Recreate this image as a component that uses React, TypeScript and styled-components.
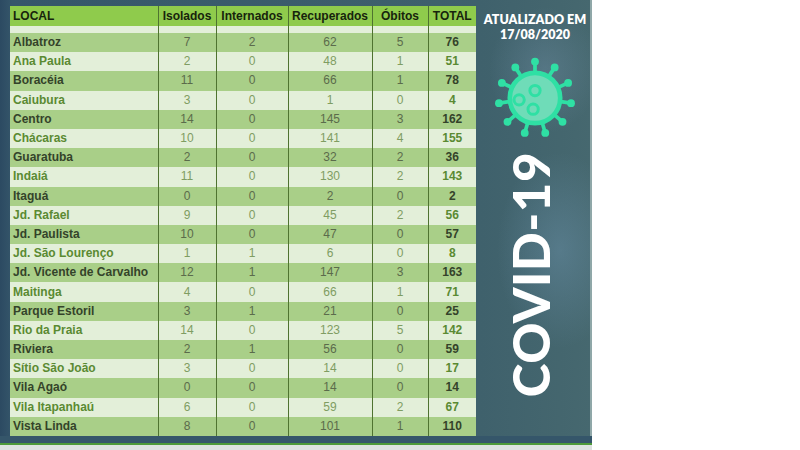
import styled, { createGlobalStyle } from "styled-components";

const GlobalStyle = createGlobalStyle`
	html, body {
		margin: 0;
		padding: 0;
		background: #ffffff;
	}
	body {
		width: 800px;
		height: 450px;
		overflow: hidden;
	}
`;

type Row = [string, number, number, number, number, number];

const rows: Row[] = [
	["Albatroz", 7, 2, 62, 5, 76],
	["Ana Paula", 2, 0, 48, 1, 51],
	["Boracéia", 11, 0, 66, 1, 78],
	["Caiubura", 3, 0, 1, 0, 4],
	["Centro", 14, 0, 145, 3, 162],
	["Chácaras", 10, 0, 141, 4, 155],
	["Guaratuba", 2, 0, 32, 2, 36],
	["Indaiá", 11, 0, 130, 2, 143],
	["Itaguá", 0, 0, 2, 0, 2],
	["Jd. Rafael", 9, 0, 45, 2, 56],
	["Jd. Paulista", 10, 0, 47, 0, 57],
	["Jd. São Lourenço", 1, 1, 6, 0, 8],
	["Jd. Vicente de Carvalho", 12, 1, 147, 3, 163],
	["Maitinga", 4, 0, 66, 1, 71],
	["Parque Estoril", 3, 1, 21, 0, 25],
	["Rio da Praia", 14, 0, 123, 5, 142],
	["Riviera", 2, 1, 56, 0, 59],
	["Sítio São João", 3, 0, 14, 0, 17],
	["Vila Agaó", 0, 0, 14, 0, 14],
	["Vila Itapanhaú", 6, 0, 59, 2, 67],
	["Vista Linda", 8, 0, 101, 1, 110],
];

const columns = [
	{ label: "LOCAL", width: 148 },
	{ label: "Isolados", width: 58 },
	{ label: "Internados", width: 72 },
	{ label: "Recuperados", width: 84 },
	{ label: "Óbitos", width: 56 },
	{ label: "TOTAL", width: 48 },
];

const Page = styled.div`
	width: 800px;
	height: 450px;
	background: #ffffff;
`;

const Poster = styled.div`
	display: flex;
	flex-direction: column;
	width: 592px;
	height: 450px;
	background:
		radial-gradient(ellipse 90px 140px at 560px 250px, rgba(120, 160, 190, 0.35), transparent 70%),
		radial-gradient(ellipse 80px 90px at 545px 70px, rgba(140, 170, 200, 0.25), transparent 70%),
		linear-gradient(90deg, #2c4a62 0px, #35566a 12px, #3f616c 480px, #46686f 592px);
	font-family: "Liberation Sans", Arial, sans-serif;
`;

const Main = styled.div`
	display: flex;
	flex: 1;
`;

const TableWrap = styled.div`
	padding: 6px 0 0 10px;
`;

const Table = styled.table`
	border-collapse: collapse;
	table-layout: fixed;
	width: 466px;
`;

const HeadCell = styled.th<{ $align: "left" | "center" }>`
	height: 20px;
	padding: 0 3px;
	background: #8fcb4c;
	color: #17240c;
	font-size: 12px;
	font-weight: 700;
	text-align: ${(p) => p.$align};
	border-left: 1px solid #4f7330;
	&:first-child {
		border-left: none;
	}
`;

const SpacerCell = styled.td`
	height: 7px;
	padding: 0;
	background: #e3efd9;
	border-left: 1px solid #4f7330;
	&:first-child {
		border-left: none;
	}
`;

const Cell = styled.td<{ $dark: boolean; $name?: boolean; $total?: boolean }>`
	height: 19.2px;
	padding: 0 3px;
	line-height: 19px;
	background: ${(p) => (p.$dark ? "#a9cf88" : "#e3efd9")};
	color: ${(p) =>
		p.$name || p.$total
			? p.$dark
				? "#34432a"
				: "#5a8a32"
			: p.$dark
			? "#5b6b4b"
			: "#7f9d62"};
	font-size: 12px;
	font-weight: ${(p) => (p.$name || p.$total ? 700 : 400)};
	text-align: ${(p) => (p.$name ? "left" : "center")};
	white-space: nowrap;
	border-left: 1px solid #4f7330;
	&:first-child {
		border-left: none;
	}
`;

const Side = styled.div`
	display: flex;
	flex: 1;
	flex-direction: column;
	align-items: center;
	padding-top: 12px;
	border-right: 2px solid #8fa7a8;
`;

const Updated = styled.div`
	color: #ffffff;
	font-family: Lato, "Open Sans", sans-serif;
	font-size: 12.5px;
	font-weight: 800;
	line-height: 15px;
	text-align: center;
	white-space: nowrap;
	margin-left: 4px;
`;

const Virus = styled.svg`
	margin-top: 14px;
	margin-left: 4px;
	width: 84px;
	height: 84px;
`;

const CovidText = styled.div`
	margin-top: 12px;
	margin-right: 4px;
	writing-mode: vertical-rl;
	transform: rotate(180deg);
	color: #ffffff;
	font-family: Lato, "Open Sans", sans-serif;
	font-size: 51px;
	font-weight: 900;
	line-height: 44px;
	letter-spacing: 0.5px;
`;

const Footer = styled.div`
	height: 14px;
	background: linear-gradient(
		180deg,
		#35566a 0px,
		#35566a 7px,
		#4d9a3a 7px,
		#4d9a3a 9px,
		#dde2e0 9px
	);
`;

function VirusIcon() {
	const spikes = Array.from({ length: 11 }, (_, i) => (i * 360) / 11 - 90);
	return (
		<Virus viewBox="0 0 90 90">
			{spikes.map((a) => {
				const r = (a * Math.PI) / 180;
				const x1 = 45 + Math.cos(r) * 28;
				const y1 = 45 + Math.sin(r) * 28;
				const x2 = 45 + Math.cos(r) * 39;
				const y2 = 45 + Math.sin(r) * 39;
				return (
					<g key={a}>
						<line x1={x1} y1={y1} x2={x2} y2={y2} stroke="#2fe0a4" strokeWidth="4" />
						<circle cx={x2} cy={y2} r="4.2" fill="#2fe0a4" />
					</g>
				);
			})}
			<circle cx="45" cy="45" r="27" fill="#6fdcb8" stroke="#2fe0a4" strokeWidth="5" />
			<circle cx="45" cy="37" r="5.5" fill="none" stroke="#2fe0a4" strokeWidth="3.2" />
			<circle cx="28" cy="47" r="5.5" fill="none" stroke="#2fe0a4" strokeWidth="3.2" />
			<circle cx="43" cy="57" r="5.5" fill="none" stroke="#2fe0a4" strokeWidth="3.2" />
		</Virus>
	);
}

function App() {
	return (
		<Page>
			<GlobalStyle />
			<Poster>
				<Main>
					<TableWrap>
						<Table>
							<colgroup>
								{columns.map((c) => (
									<col key={c.label} style={{ width: c.width }} />
								))}
							</colgroup>
							<thead>
								<tr>
									{columns.map((c, i) => (
										<HeadCell key={c.label} $align={i === 0 ? "left" : "center"}>
											{c.label}
										</HeadCell>
									))}
								</tr>
							</thead>
							<tbody>
								<tr>
									{columns.map((c) => (
										<SpacerCell key={c.label} />
									))}
								</tr>
								{rows.map((row, i) => {
									const dark = i % 2 === 0;
									return (
										<tr key={row[0]}>
											<Cell $dark={dark} $name>
												{row[0]}
											</Cell>
											<Cell $dark={dark}>{row[1]}</Cell>
											<Cell $dark={dark}>{row[2]}</Cell>
											<Cell $dark={dark}>{row[3]}</Cell>
											<Cell $dark={dark}>{row[4]}</Cell>
											<Cell $dark={dark} $total>
												{row[5]}
											</Cell>
										</tr>
									);
								})}
							</tbody>
						</Table>
					</TableWrap>
					<Side>
						<Updated>
							ATUALIZADO EM
							<br />
							17/08/2020
						</Updated>
						<VirusIcon />
						<CovidText>COVID-19</CovidText>
					</Side>
				</Main>
				<Footer />
			</Poster>
		</Page>
	);
}

export default App;
